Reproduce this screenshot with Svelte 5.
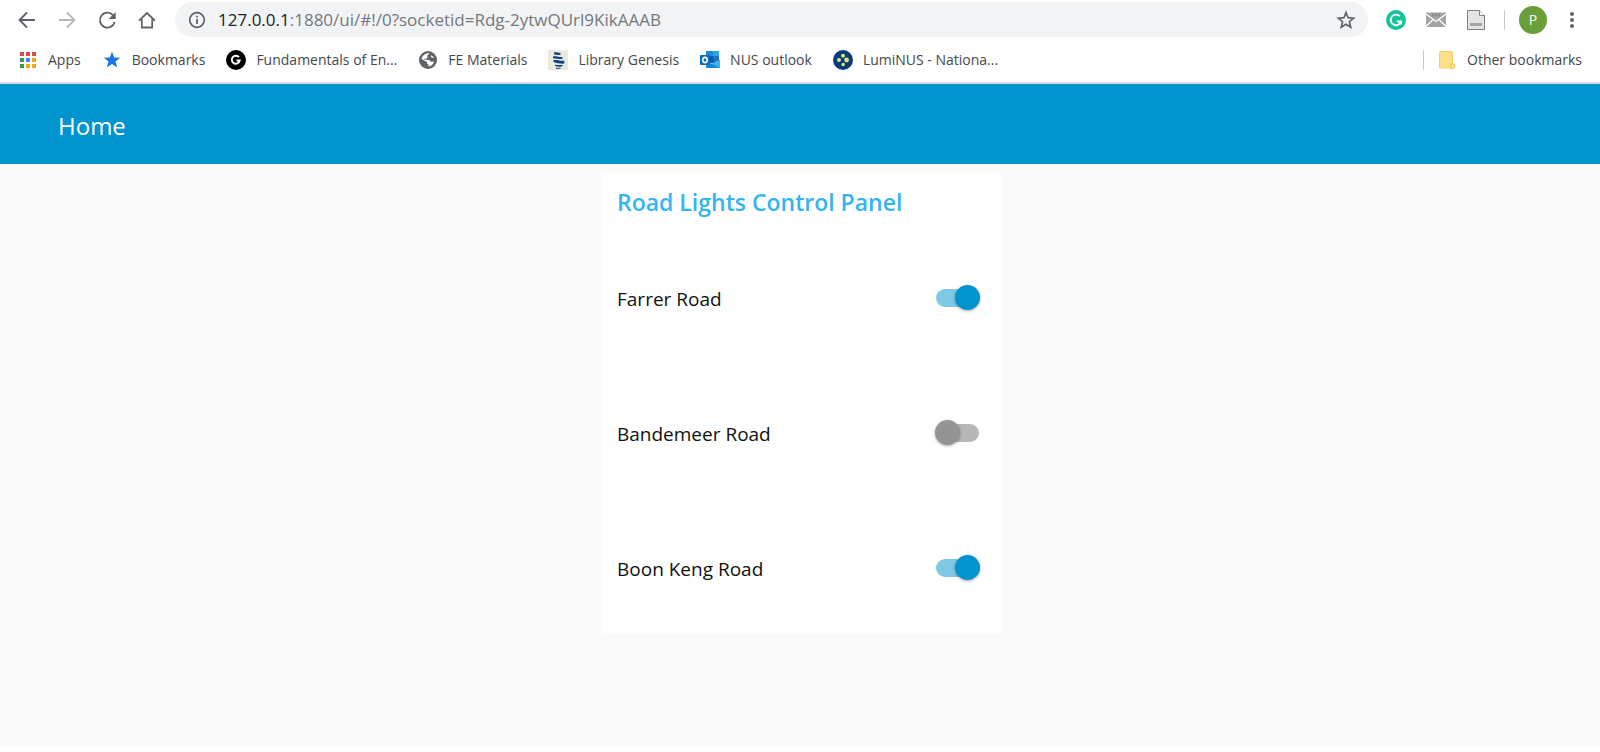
<script>
  let lights = $state([
    { id: 'farrer', name: 'Farrer Road', on: true },
    { id: 'bandemeer', name: 'Bandemeer Road', on: false },
    { id: 'boonkeng', name: 'Boon Keng Road', on: true }
  ]);

  const bookmarks = [
    { icon: 'apps', name: 'Apps' },
    { icon: 'star', name: 'Bookmarks' },
    { icon: 'gee', name: 'Fundamentals of En...' },
    { icon: 'globe', name: 'FE Materials' },
    { icon: 'library', name: 'Library Genesis' },
    { icon: 'outlook', name: 'NUS outlook' },
    { icon: 'luminus', name: 'LumiNUS - Nationa...' }
  ];

  const appColors = ['#e04a43', '#e04a43', '#e04a43', '#2f9e58', '#3f86ea', '#f0a81c', '#2f9e58', '#f0a81c', '#f0a81c'];
</script>

{#snippet glyph(kind)}
  <svg class="mark" viewBox="0 0 20 20" aria-hidden="true">
    {#if kind === 'apps'}
      {#each appColors as color, i}
        <rect x={2 + (i % 3) * 6} y={2 + Math.floor(i / 3) * 6} width="4" height="4" fill={color} />
      {/each}
    {:else if kind === 'star'}
      <path fill="#1a73e8" d="M10 1.800l2.200 5.800 6 .2-4.700 3.800 1.700 5.900-5.200-3.400-5.200 3.400 1.700-5.900L1.800 7.800l6-.2z" />
    {:else if kind === 'gee'}
      <circle cx="10" cy="10" r="10" fill="#000" />
      <path d="M13 7.300A4 4 0 1 0 13.700 10.500H10.500" fill="none" stroke="#fff" stroke-width="1.900" />
    {:else if kind === 'globe'}
      <circle cx="10" cy="10" r="9" fill="#5f6368" />
      <path d="M11.500 3.200c-.3 1.500-1.800 1.300-2.200 2.400-.4 1 .8 1.600 0 2.300-1 .9-2.900.2-3.300 1.500l4.500.6c1.600.2 1.900 1.600 3.200 1.700l2.300-.1a6.600 6.600 0 0 1-5.500 5l.1-1.900c-1.500-.4-1.700-1.400-1.700-2.600L3.600 8.900C4.200 5.500 7.500 2.700 11.500 3.200zM13 5.200c-.5 1 .1 1.900.8 2.200l2.400.3A7 7 0 0 0 13 5.200z" fill="#fff" />
    {:else if kind === 'library'}
      <rect width="20" height="20" fill="#eaebdc" />
      <path fill="#123f8c" d="M6 2.600c2.500-1 4 .6 6.500.2v2c-2.500.6-4.500 0-6.500-.3zM5 6.400c2.500-.8 5 .5 9.500.5v2c-3.500.4-6.500 0-9.500-.6zM5.500 10c4-.4 6.500.8 10.800.7v2.900c-3.500.2-7-.1-10.800-1.500zM7 14.700c2.500.3 5 .6 8 .3-.6 1.300-1.400 1.700-2.500 1.700-2.200.1-4-.3-5.500-.8zM8 17.500c1.500.4 3 .4 4.500 0v1.200H8z" />
    {:else if kind === 'outlook'}
      <path fill="#1066b5" d="M6 1h13v12H6z" />
      <path fill="#1c88d8" d="M6 1h13v5H6z" />
      <path fill="#2ba0e4" d="M13 1h6v5h-6z" />
      <path fill="#1a73c4" d="M13 6h6v5h-6z" />
      <path fill="#0a56a0" d="M8 6h5v6H8z" />
      <path fill="#37b4ef" d="M20 9.500V18H7v-2z" />
      <path fill="#1b84d6" d="M6 11l14 7H7a1 1 0 0 1-1-1z" />
      <rect y="5" width="10" height="10" rx="1" fill="#0a6cc0" />
      <ellipse cx="5" cy="10" rx="2.200" ry="2.600" fill="none" stroke="#fff" stroke-width="1.600" />
    {:else if kind === 'luminus'}
      <circle cx="10" cy="10" r="10" fill="#083c77" />
      <g fill="#e5de82">
        <circle cx="10" cy="5.700" r="2" />
        <circle cx="6" cy="10" r="2" />
        <circle cx="13.600" cy="10" r="2.400" />
        <circle cx="10.200" cy="14.500" r="1.800" />
      </g>
    {:else if kind === 'folder'}
      <path fill="#fbe08a" stroke="#f0d067" d="M3.500 1.500h11a1 1 0 0 1 1 1v11.500h1v4H3.500a1 1 0 0 1-1-1v-14.500a1 1 0 0 1 1-1z" />
      <path fill="#fde795" stroke="#ecc95b" d="M14 18.500v-4.500h3.500v3a1.500 1.500 0 0 1-1.500 1.500z" />
    {/if}
  </svg>
{/snippet}

<div class="page">
  <header class="browser">
    <div class="toolbar">
      <button class="tool" aria-label="Back">
        <svg viewBox="0 0 20 20"><path d="M18 10H3M10 2.500L2.500 10l7.500 7.500" /></svg>
      </button>
      <button class="tool faded" aria-label="Forward">
        <svg viewBox="0 0 20 20"><path d="M2 10h15M10 2.500l7.500 7.500-7.500 7.500" /></svg>
      </button>
      <button class="tool" aria-label="Reload">
        <svg viewBox="0 0 20 20"><path d="M16.200 5.300A7.500 7.500 0 1 0 17.700 12" /><path class="solid" d="M18.700 2v7h-7z" /></svg>
      </button>
      <button class="tool" aria-label="Home page">
        <svg viewBox="0 0 20 20"><path d="M2 10.700L10 3l8 7.700M4.800 9v8.500h10.400V9" /></svg>
      </button>

      <div class="address">
        <svg class="info" viewBox="0 0 20 20" aria-hidden="true">
          <circle cx="10" cy="10" r="7.300" fill="none" stroke="#5f6368" stroke-width="1.700" />
          <path d="M10 9v5M10 5.800v1.800" stroke="#5f6368" stroke-width="1.800" />
        </svg>
        <a class="url" href="#!/0"><span class="host">127.0.0.1</span>:1880/ui/#!/0?socketid=Rdg-2ytwQUrl9KikAAAB</a>
        <button class="favorite" aria-label="Bookmark this page">
          <svg viewBox="0 0 20 20"><path d="M10 2.600l2.100 5.100 5.500.4-4.200 3.600 1.300 5.400-4.700-2.900-4.700 2.900 1.300-5.400L2.400 8.100l5.500-.4z" /></svg>
        </button>
      </div>

      <div class="extensions">
        <button class="tool" aria-label="Writing assistant">
          <svg viewBox="0 0 20 20">
            <circle class="plain" cx="10" cy="10" r="10" style:fill="#15c39a" />
            <path d="M13.800 6.200a5.300 5.300 0 1 0 1.300 5.300h-4M15.200 14.600v-3.200" style:stroke="#fff" />
          </svg>
        </button>
        <button class="tool" aria-label="Mail">
          <svg viewBox="0 0 20 20">
            <rect class="plain" y="2.500" width="20" height="14.500" style:fill="#a3a3a3" />
            <path d="M0 4l10 7.500L20 4M0 16.500l7-7M20 16.500l-7-7" style:stroke="#fff" style:stroke-width="1.300" />
            <path d="M7 3.500v3M10 3.500v3M13 3.500v3" style:stroke="#777" style:stroke-width="1" />
          </svg>
        </button>
        <button class="tool" aria-label="Document">
          <svg viewBox="0 0 20 20">
            <path class="plain" d="M1.500.5h12l5 5v14h-17z" style:fill="#e4e4e4" style:stroke="#808080" />
            <path class="plain" d="M13.500.5v5h5" style:fill="#fff" style:stroke="#808080" />
            <rect class="plain" x="4" y="13" width="12" height="3" style:fill="#a4a4a4" />
          </svg>
        </button>
      </div>
      <span class="rule"></span>
      <button class="avatar" aria-label="Profile">P</button>
      <button class="tool" aria-label="Menu">
        <svg viewBox="0 0 20 20"><circle class="solid" cx="10" cy="4" r="2" /><circle class="solid" cx="10" cy="10" r="2" /><circle class="solid" cx="10" cy="16" r="2" /></svg>
      </button>
    </div>

    <nav class="bookmarks" aria-label="Bookmarks">
      {#each bookmarks as item}
        <a href="#!/0">{@render glyph(item.icon)}{item.name}</a>
      {/each}
      <span class="rule other"></span>
      <a href="#!/0">{@render glyph('folder')}Other bookmarks</a>
    </nav>
  </header>

  <div class="titlebar"><h1>Home</h1></div>

  <main>
    <section class="panel">
      <h2>Road Lights Control Panel</h2>
      <div class="lights">
        {#each lights as light (light.id)}
          <div class="light">
            <label for={light.id}>{light.name}</label>
            <input id={light.id} type="checkbox" role="switch" bind:checked={light.on} />
          </div>
        {/each}
      </div>
    </section>
  </main>
</div>

<style>
  :global(body) {
    margin: 0;
    background: #fff;
  }

  .page {
    display: flex;
    flex-direction: column;
    box-sizing: border-box;
    min-height: 100vh;
    padding-bottom: 6px;
    font-family: 'Open Sans', 'Noto Sans', sans-serif;
  }

  button {
    padding: 0;
    border: 0;
    background: none;
    font-family: inherit;
  }

  a {
    color: inherit;
    text-decoration: none;
  }

  svg {
    display: block;
    flex: none;
    width: 20px;
    height: 20px;
  }

  .browser {
    border-bottom: 2px solid #d5dade;
    background: #fff;
  }

  .toolbar {
    display: flex;
    align-items: center;
    height: 39px;
    padding: 0 8px 0 7px;
  }

  .tool {
    display: flex;
    justify-content: center;
    width: 40px;
  }

  .tool svg {
    fill: none;
    stroke: #5f6368;
    stroke-width: 1.8;
  }

  .tool svg .solid {
    fill: #5f6368;
    stroke: none;
  }

  .tool svg .plain {
    stroke-width: 1;
  }

  .tool svg circle.plain,
  .tool svg rect.plain {
    stroke: none;
  }

  .faded {
    opacity: 0.45;
  }

  .address {
    display: flex;
    flex: 1;
    align-items: center;
    height: 35px;
    margin-left: 8px;
    padding: 0 12px;
    border-radius: 18px;
    background: #f1f3f4;
  }

  .url {
    flex: 1;
    margin-left: 11px;
    color: #74787c;
    font-size: 17px;
    line-height: 24px;
  }

  .host {
    color: #202124;
  }

  .favorite svg {
    fill: none;
    stroke: #5f6368;
    stroke-width: 1.7;
  }

  .extensions {
    display: flex;
    margin-left: 8px;
  }

  .rule {
    width: 1px;
    height: 20px;
    margin: 0 14px 0 8px;
    background: #c6c9cc;
  }

  .avatar {
    width: 28px;
    height: 28px;
    margin-right: 5px;
    border-radius: 50%;
    background: #689f38;
    color: #fff;
    font-size: 14px;
    line-height: 28px;
  }

  .bookmarks {
    display: flex;
    align-items: center;
    gap: 21px;
    height: 41px;
    padding: 0 18px 2px;
    color: #45484c;
    font-size: 14px;
    line-height: 20px;
    white-space: nowrap;
  }

  .bookmarks a {
    display: flex;
    align-items: center;
    gap: 10px;
  }

  .other {
    margin: 0 -8px 0 auto;
  }

  .titlebar {
    display: flex;
    align-items: center;
    height: 76px;
    padding: 4px 58px 0;
    background: #0094ce;
    color: #fff;
  }

  h1 {
    margin: 0;
    font-size: 24px;
    font-weight: 400;
    line-height: 32px;
  }

  main {
    flex: 1;
    padding: 8px 8px 8px 10px;
    background: #fafafa;
  }

  .panel {
    box-sizing: border-box;
    width: 100%;
    max-width: 400px;
    margin: 0 auto;
    padding: 0 21px 0 16px;
    background: #fff;
  }

  h2 {
    margin: 0;
    color: #34b4f0;
    font-size: 23px;
    font-weight: 600;
    line-height: 61px;
    white-space: nowrap;
  }

  .lights {
    display: flex;
    flex-direction: column;
    gap: 5px;
  }

  .light {
    display: flex;
    align-items: center;
    justify-content: space-between;
    height: 130px;
    color: #111;
    font-size: 19px;
    line-height: 26px;
  }

  .light label {
    padding-top: 2px;
  }

  input {
    display: grid;
    align-items: center;
    width: 45px;
    height: 26px;
    margin: 0;
    appearance: none;
  }

  input::before,
  input::after {
    grid-area: 1 / 1;
    content: '';
  }

  input::before {
    height: 18px;
    margin: 0 1px;
    border-radius: 9px;
    background: #b7b7b7;
  }

  input::after {
    align-self: start;
    width: 25px;
    height: 25px;
    border-radius: 50%;
    background: #949494;
    box-shadow: 0 1px 3px rgba(0, 0, 0, 0.35);
  }

  input:checked::before {
    background: #80c9e6;
  }

  input:checked::after {
    justify-self: end;
    background: #0094ce;
  }
</style>
